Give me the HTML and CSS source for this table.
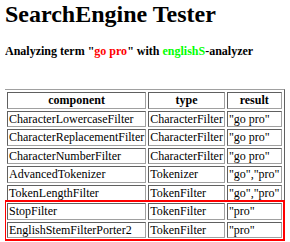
FILE: index.html
```html
<!DOCTYPE html>
<html>
<head>
<meta charset="utf-8">
<link rel="stylesheet" href="styles.css">
</head>
<body>
<h1 class="title">SearchEngine Tester</h1>
<h4 class="subtitle">Analyzing term "<span class="term">go pro</span>" with <span class="analyzer">englishS</span>-analyzer</h4>
<table class="results">
<thead>
<tr><th>component</th><th>type</th><th>result</th></tr>
</thead>
<tbody>
<tr><td>CharacterLowercaseFilter</td><td>CharacterFilter</td><td>"go pro"</td></tr>
<tr><td>CharacterReplacementFilter</td><td>CharacterFilter</td><td>"go pro"</td></tr>
<tr><td>CharacterNumberFilter</td><td>CharacterFilter</td><td>"go pro"</td></tr>
<tr><td>AdvancedTokenizer</td><td>Tokenizer</td><td>"go","pro"</td></tr>
<tr><td>TokenLengthFilter</td><td>TokenFilter</td><td>"go","pro"</td></tr>
</tbody>
<tbody class="highlight">
<tr><td>StopFilter</td><td>TokenFilter</td><td>"pro"</td></tr>
<tr><td>EnglishStemFilterPorter2</td><td>TokenFilter</td><td>"pro"</td></tr>
</tbody>
</table>
</body>
</html>
```
FILE: styles.css
```css
body {
  margin: 0 5px;
  font-family: "Liberation Serif", "Times New Roman", serif;
  font-size: 12px;
  color: #000;
  background: #fff;
}
.title {
  font-size: 24px;
  font-weight: bold;
  margin: 1px 0 16px;
}
.subtitle {
  font-size: 12px;
  font-weight: bold;
  margin: 0 0 30px;
}
.term { color: #ff0000; }
.analyzer { color: #00ff00; }
.results {
  border: 1px solid #808080;
  border-color: #a0a0a0 #606060 #606060 #a0a0a0;
  border-spacing: 2px;
  margin-left: -1px;
}
.results th,
.results td {
  border: 1px solid #808080;
  border-color: #606060 #a0a0a0 #a0a0a0 #606060;
  padding: 0 1px;
  line-height: 14.5px;
  text-align: left;
}
.results th { text-align: center; }
.highlight { outline: 2px solid #ff0000; outline-offset: 1px; }
```
